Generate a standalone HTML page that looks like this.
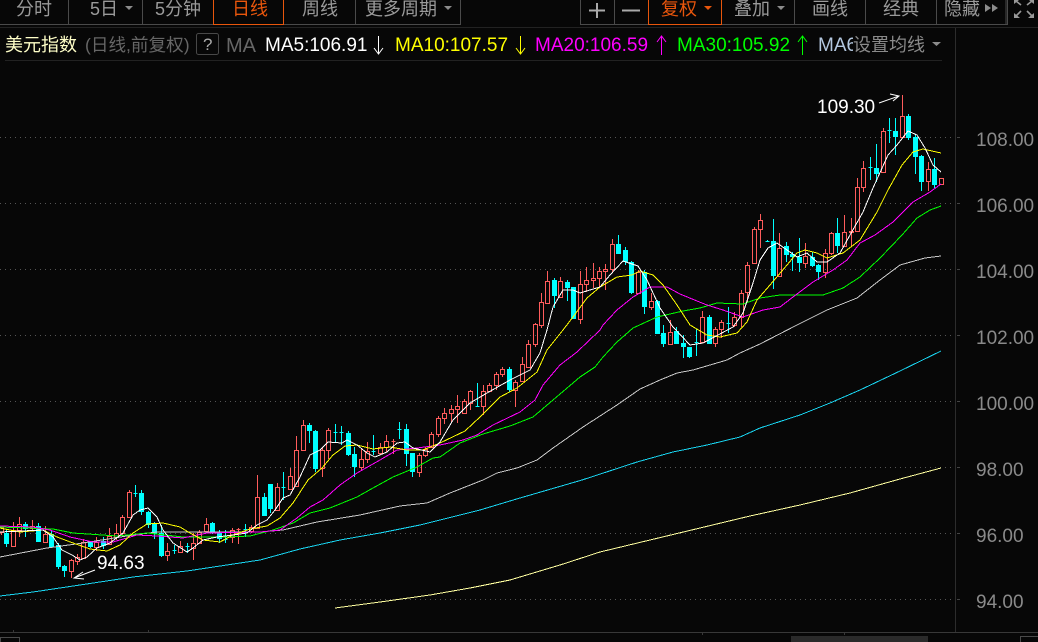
<!DOCTYPE html>
<html><head><meta charset="utf-8">
<style>
html,body{margin:0;padding:0;background:#070707}
#r{position:relative;width:1038px;height:642px;overflow:hidden;background:#070707;font-family:"Liberation Sans","Noto Sans CJK SC",sans-serif}
#r span{position:absolute;white-space:nowrap;line-height:20px}
.n{font-size:18px;color:#9a9a9a;top:-1px}
.m{font-size:19px;top:36px;letter-spacing:0}
.a{font-size:19px;color:#8a8a8a;left:976px}
svg{position:absolute;left:0;top:0}
</style></head><body>
<div id="r">
<svg width="1038" height="642" viewBox="0 0 1038 642">
<g fill="none" stroke="#4a4a4a" stroke-width="1">
<path d="M0 24.5H68.5V0M142.5 0V24.5M0 24.5H213M283 24.5H460.5V0M355.5 0V24.5M283.5 0V24.5"/>
<path d="M580.5 0V24.5H1007.5V0M614.5 0V24.5M648 24.5M721.5 0V24.5M794.5 0V24.5M865.5 0V24.5M936.5 0V24.5M1006 0V24.5"/>
</g>
<path d="M213.5 0V24.5H283.5V0M648.5 0V24.5H721.5V0" fill="none" stroke="#e8560c"/>
<path d="M0 27.5H1038" stroke="#222"/>
<path d="M5 60.5H942" stroke="#222"/>
<path d="M955.5 28V632" stroke="#2c2c2c"/>
<g stroke="#555" stroke-dasharray="1 4" fill="none">
<path d="M0 137.5H952M0 203.5H952M0 269.5H952M0 335.5H952M0 401.5H952M0 467.5H952M0 533.5H952M0 599.5H952"/>
</g>
<path d="M957 137.5h3M957 203.5h3M957 269.5h3M957 335.5h3M957 401.5h3M957 467.5h3M957 533.5h3M957 599.5h3" stroke="#444"/>
<path d="M0 632.5H1038M13.5 630V633M148.5 630V633M702.5 632V635M844.5 632V635" stroke="#383838" fill="none"/>
<rect x="791" y="636" width="137" height="6" fill="#2a2a2a"/>
<path d="M0.5 642V637.5H19.5V642M1020.5 642V636.5H1038" fill="none" stroke="#4a4a4a"/>
<!-- toolbar glyphs -->
<path d="M597 3V18M589 10.5H605M622 10.5H640" stroke="#aaa" stroke-width="2" fill="none"/>
<g fill="#8c8c8c">
<path d="M125 6H133L129 10ZM444 6H452L448 10ZM777 6H785L781 10ZM932 42H941L936.5 46Z"/>
<path d="M985 4L991 8L985 12ZM992 4L998 8L992 12Z"/>
</g>
<path d="M704 6H712L708 10Z" fill="#e8560c"/>
<g fill="none" stroke="#999" stroke-width="1.6">
<path d="M1016 1L1021 5M1032 1L1027 5M1016 16L1021 11M1032 16L1027 11"/>
</g>
<g fill="#999"><path d="M1014 0h5l-5 4zM1034 0h-5l5 4zM1014 18h6l-6-5zM1034 18h-6l6-5z"/></g>
<rect x="196.5" y="33.5" width="22" height="21" rx="2" fill="none" stroke="#484848"/>
<!-- legend arrows -->
<path d="M378.5 36V54M374 48L378.5 54L383 48" stroke="#fff" fill="none"/>
<path d="M520.5 36V54M516 48L520.5 54L525 48" stroke="#ff0" fill="none"/>
<path d="M661.5 36V55M657 42L661.5 36L666 42" stroke="#f0f" fill="none"/>
<path d="M802.5 36V55M798 42L802.5 36L807 42" stroke="#0f0" fill="none"/>
<!-- candles -->
<path id="cr" fill="none" stroke="#ff5c5c" stroke-width="1"/>
<path id="cc" fill="#00ffff" stroke="#00ffff" stroke-width="1"/>
<!-- moving averages -->
<g fill="none" stroke-width="1" shape-rendering="crispEdges">
<polyline stroke="#ffffa0" points="335,608 380,602 430,595 470,588 510,580 560,565 600,552 650,540 700,528 750,516 800,505 850,493 900,479 941,468"/>
<polyline stroke="#19d4f0" points="0,596 33,592 80,585 133,577 187,571 260,560 300,549 340,540 380,533 420,525 480,510 520,498 582,480 637,462 673,452 707,445 740,437 760,428 800,415 830,403 860,390 900,371 941,351"/>
<polyline stroke="#c8c8c8" points="0,557 47,548 83,543 133,535 157,532 260,532 283,530 317,522 360,515 400,506 427,503 450,493 483,480 497,473 517,468 537,460 553,448 583,427 617,405 640,389 660,380 677,373 693,370 727,360 740,353 760,344 797,325 827,310 857,298 880,280 900,265 925,258 941,256"/>
<polyline stroke="#00ff00" points="0,527 53,529 73,533 117,536 147,533 183,537 227,537 250,536 273,530 293,523 310,513 330,508 357,497 373,488 393,477 417,467 433,458 440,457 460,443 483,434 510,426 533,417 553,400 580,377 595,367 603,357 617,342 633,328 657,317 683,311 700,308 717,303 743,304 760,298 780,295 810,295 823,295 843,288 860,277 880,258 902,235 917,218 930,210 941,206"/>
<polyline stroke="#ff00ff" points="0,526 33,527 50,530 70,537 93,542 113,542 137,535 157,536 183,538 207,533 260,532 280,530 297,518 310,507 323,500 340,485 357,473 380,460 397,450 417,448 440,445 463,440 477,435 493,425 520,412 535,400 543,385 560,365 577,352 600,330 603,325 617,310 633,297 650,287 667,287 680,294 697,301 707,305 723,310 743,317 763,310 780,307 793,297 813,282 833,270 847,260 860,243 875,235 893,222 913,202 930,192 941,184"/>
<polyline stroke="#ffff00" points="0,528 20,532 43,530 57,537 73,543 90,549 107,551 120,545 133,533 147,524 163,523 180,527 190,533 203,540 220,542 233,535 250,529 267,526 280,518 293,503 308,480 322,468 333,455 345,446 357,445 373,449 390,447 407,450 423,450 440,443 465,431 480,417 500,397 517,388 537,372 547,350 563,330 573,317 587,298 600,287 617,277 632,275 640,271 653,275 663,285 677,305 690,325 707,335 720,337 737,333 747,322 757,300 770,285 787,265 797,253 805,250 817,253 827,258 843,253 860,240 877,212 888,190 902,165 913,152 923,149 941,153"/>
<polyline stroke="#ffffff" points="0,532 43,530 53,537 62,550 72,555 80,560 87,557 97,548 110,543 123,533 133,515 140,510 148,508 157,517 163,530 173,543 187,552 193,548 203,540 217,537 233,535 247,533 257,525 267,520 275,510 283,498 290,495 300,477 310,455 320,450 328,442 342,443 347,440 357,445 367,453 375,457 387,452 397,443 405,442 413,448 430,452 440,442 453,420 470,403 487,393 510,380 530,370 540,353 547,330 553,307 563,290 573,290 580,293 590,290 600,287 610,275 623,261 638,266 647,280 660,308 673,327 690,345 703,343 733,327 743,313 753,283 760,260 768,248 777,243 787,250 797,257 807,253 817,262 827,262 840,253 850,235 863,212 873,188 888,155 897,145 908,131 917,135 925,148 933,165 941,172"/>
</g>
<path d="M879 103L899 96M890 94L899 96L893 101" fill="none" stroke="#fff"/>
<path d="M95 570L74 578M83 572L74 578L84 579" fill="none" stroke="#fff"/>
</svg>

<span class="n" style="left:16px">分时</span>
<span class="n" style="left:90px">5日</span>
<span class="n" style="left:155px">5分钟</span>
<span class="n" style="left:232px;color:#e8560c">日线</span>
<span class="n" style="left:302px">周线</span>
<span class="n" style="left:365px">更多周期</span>
<span class="n" style="left:661px;color:#e8560c">复权</span>
<span class="n" style="left:734px">叠加</span>
<span class="n" style="left:812px">画线</span>
<span class="n" style="left:883px">经典</span>
<span class="n" style="left:944px">隐藏</span>

<span style="left:5px;top:35px;font-size:18px;color:#ffffc8">美元指数</span>
<span style="left:85px;top:35px;font-size:17.6px;color:#666">(日线,前复权)</span>
<span style="left:203px;top:35px;font-size:17px;color:#aaa">?</span>
<span class="m" style="left:226px;color:#666;font-size:20px">MA</span>
<span class="m" style="left:265px;color:#fff">MA5:106.91</span>
<span class="m" style="left:395px;color:#ff0">MA10:107.57</span>
<span class="m" style="left:535px;color:#f0f">MA20:106.59</span>
<span class="m" style="left:677px;color:#0f0">MA30:105.92</span>
<span class="m" style="left:818px;color:#b4c8e0;width:35px;overflow:hidden">MA60:</span>
<span style="left:853px;top:35px;font-size:18px;color:#8a8a8a">设置均线</span>

<span class="a" style="top:131px">108.00</span>
<span class="a" style="top:197px">106.00</span>
<span class="a" style="top:263px">104.00</span>
<span class="a" style="top:329px">102.00</span>
<span class="a" style="top:395px">100.00</span>
<span class="a" style="top:461px">98.00</span>
<span class="a" style="top:527px">96.00</span>
<span class="a" style="top:593px">94.00</span>
<span style="left:817px;top:98px;font-size:19px;color:#fff">109.30</span>
<span style="left:97px;top:554px;font-size:19px;color:#fff">94.63</span>
</div>
<script>
var d="r1,526,527,532,535 c6,530,533,543,547 r13,522,530,546,546 r19,517,524,530,537 c25,522,524,528,537 r32,520,526,528,530 c38,523,526,541,542 r45,526,534,542,542 c51,530,534,546,547 c58,543,545,566,569 c64,565,566,570,577 r71,559,560,571,578 r77,554,557,561,565 r83,539,542,558,558 c90,541,541,546,548 r96,537,542,547,551 c103,537,541,545,549 r109,528,536,544,544 r116,524,533,537,540 r122,515,517,533,537 r129,490,492,517,517 c135,485,493,493,497 c141,490,493,511,515 c148,511,512,524,528 c154,522,523,533,539 c161,525,533,555,557 r167,543,551,555,561 c174,545,550,550,554 r180,541,546,552,552 c187,543,546,546,553 r193,533,543,548,560 r199,530,532,543,544 r206,518,524,531,533 c212,522,523,532,534 c219,530,533,538,543 c225,530,539,539,543 r232,528,530,537,543 r238,528,529,529,544 c245,524,529,529,537 r251,525,527,531,533 r257,475,497,528,529 c264,493,497,515,516 c270,484,484,508,513 r277,483,487,510,510 c283,472,487,487,500 r290,468,476,489,489 r296,436,450,486,486 r303,420,425,450,450 c309,423,425,430,443 c315,430,431,468,472 r322,448,450,468,477 r328,428,430,450,459 c335,424,432,432,443 c341,426,432,432,445 c348,431,433,454,456 c354,447,454,466,477 r361,448,459,467,470 r367,442,451,459,463 c373,435,451,451,455 r380,443,447,453,455 r386,435,441,447,452 r393,439,441,441,454 c399,422,429,429,439 c406,424,429,453,466 c412,453,453,471,477 r419,453,455,472,477 r425,447,449,455,457 r431,432,434,447,448 r438,416,418,434,437 r444,408,413,418,424 r451,405,409,413,422 r457,395,406,409,423 r464,399,401,413,413 r470,390,391,403,410 c477,383,406,406,407 r483,385,391,406,415 r489,383,385,391,391 r496,372,374,385,390 r502,367,369,374,377 c509,367,369,389,392 r515,380,382,390,407 r522,357,364,381,381 r528,340,344,367,367 r535,323,324,344,347 r541,293,302,325,328 r547,271,281,303,303 c554,278,280,295,308 r560,277,281,297,297 c567,280,282,287,301 c573,287,287,318,318 r580,271,284,319,324 r586,267,280,284,292 r593,263,278,280,288 r599,267,271,278,287 r605,264,269,271,290 r612,239,244,269,273 c618,235,244,253,253 c625,247,250,261,265 c631,261,262,292,294 r638,270,272,293,293 c644,270,272,306,314 r651,293,301,307,310 c657,300,301,333,333 c663,325,333,343,347 r670,320,332,344,344 c676,327,331,343,344 c683,335,343,346,358 c689,347,347,356,358 c696,329,342,342,356 r702,311,317,342,342 c709,315,317,343,343 r715,327,329,343,347 r721,320,322,329,338 c728,307,323,323,333 r734,312,317,325,327 r741,290,293,317,327 r747,262,265,292,302 r754,227,229,263,263 r760,214,220,229,248 c767,240,241,241,242 c773,219,241,275,289 r779,233,248,276,277 c786,242,246,254,262 c792,252,254,256,271 c799,238,257,262,272 r805,243,256,263,268 c812,252,257,265,267 c818,264,265,271,280 r825,249,253,272,278 r831,232,233,253,255 c837,218,233,245,253 r844,215,232,246,247 r851,218,231,232,247 r857,178,187,231,232 r863,161,168,187,192 c870,157,167,167,180 c876,144,168,173,182 r883,128,131,172,173 c889,118,130,130,143 c895,118,131,136,155 r902,95,116,137,138 c908,114,116,137,140 c915,134,137,156,174 c921,155,156,181,191 r928,162,169,181,191 c934,158,169,184,188 r941,178,178,184,184".split(" ");
var R="",C="";
d.forEach(function(s){
 var t=s[0],v=s.slice(1).split(",").map(Number),x=v[0],h=v[1],a=v[2],b=v[3],l=v[4];
 var w=x+.5,p="M"+w+" "+h+"V"+a+"M"+w+" "+(b+.5)+"V"+l+"M"+(x-1.5)+" "+(a+.5)+"H"+(x+2.5)+"V"+(b+.5)+"H"+(x-1.5)+"Z";
 if(t=="r")R+=p;else C+=p;
});
document.getElementById("cr").setAttribute("d",R);
document.getElementById("cc").setAttribute("d",C);
</script>
</body></html>
